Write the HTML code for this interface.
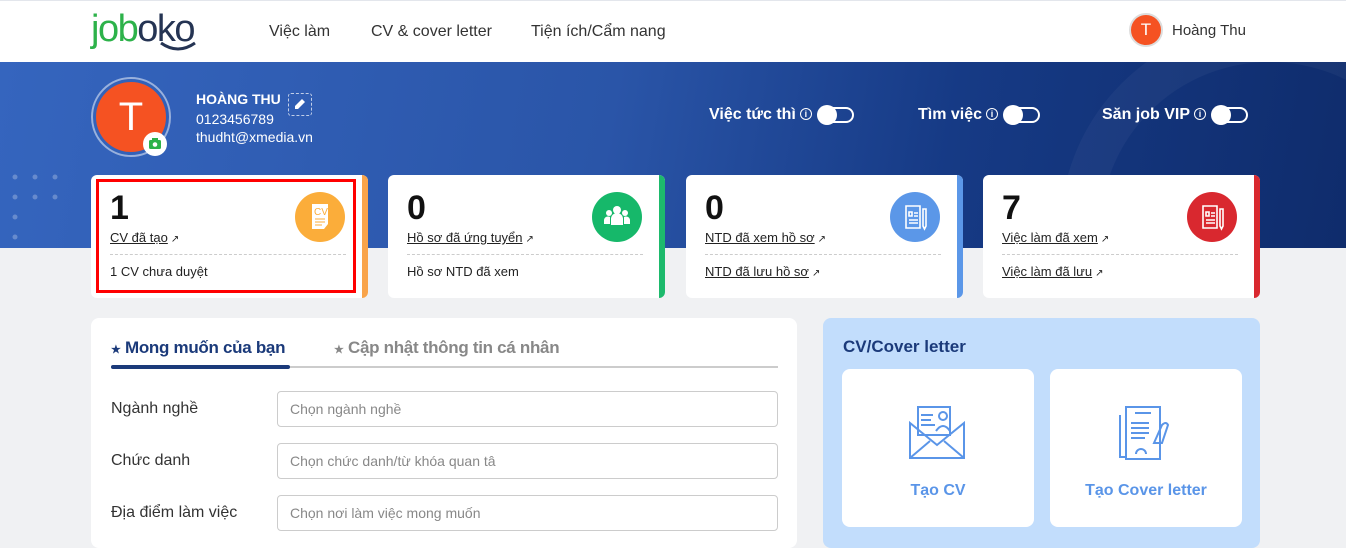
<!DOCTYPE html>
<html><head><meta charset="utf-8"><style>
*{margin:0;padding:0;box-sizing:border-box}
body{width:1346px;height:538px;overflow:hidden;background:#f0f1f3;font-family:"Liberation Sans",Arial,sans-serif;position:relative}
.abs{position:absolute}
.hdr{left:0;top:0;width:1346px;height:62px;background:#fff;border-top:1px solid #e3e6ec}
.nav{top:22px;font-size:16px;color:#333}
.ban{left:0;top:62px;width:1346px;height:186px;background:linear-gradient(100deg,#3565be 0%,#2a55a8 45%,#163a85 70%,#0f2c6c 100%);overflow:hidden}
.card{top:175px;width:277px;height:123px;background:#fff;border-radius:6px;overflow:hidden}
.card .bar{position:absolute;right:0;top:0;width:6px;height:100%}
.num{position:absolute;left:19px;top:14px;font-size:34px;font-weight:bold;color:#111}
.l1{position:absolute;left:19px;top:55px;font-size:13px;color:#222;text-decoration:underline}
.dash{position:absolute;left:19px;right:22px;top:79px;border-top:1px dashed #ccc}
.l2{position:absolute;left:19px;top:89px;font-size:13px;color:#222}
.ic{position:absolute;left:204px;top:17px;width:50px;height:50px;border-radius:50%}
.ext{font-size:10px;text-decoration:none;display:inline-block;margin-left:3px}
.tog{display:inline-block;width:36px;height:16px;border:2px solid #fff;border-radius:9px;position:relative;vertical-align:middle;margin-left:6px}
.tog:before{content:"";position:absolute;left:-3px;top:-4px;width:20px;height:20px;border-radius:50%;background:#fff}
.tl{top:106px;color:#fff;font-weight:bold;font-size:16px}
.info{display:inline-block;width:12px;height:12px;border:1px solid #fff;border-radius:50%;font-size:9px;text-align:center;line-height:10px;margin-left:4px;vertical-align:2px}
.lbl{left:111px;font-size:16px;color:#333}
.inp{left:277px;width:501px;height:36px;border:1px solid #ccc;border-radius:4px;font-size:14px;color:#888;padding:9px 12px}
.sub{top:369px;width:192px;height:158px;background:#fff;border-radius:8px}
.sub .t{position:absolute;left:0;right:0;top:113px;text-align:center;color:#5a95e8;font-weight:bold;font-size:16px}
</style></head><body>
<div class="abs hdr">
 <div class="abs" style="left:91px;top:7px;font-size:38px;letter-spacing:-1.5px;font-weight:normal"><span style="color:#2db24a">job</span><span style="color:#253453">oko</span></div>
 <svg class="abs" style="left:158px;top:40px" width="40" height="12"><path d="M3 2 Q20 14 37 2" stroke="#253453" stroke-width="3" fill="none"/></svg>
 <div class="abs nav" style="left:269px">Việc làm</div>
 <div class="abs nav" style="left:371px">CV &amp; cover letter</div>
 <div class="abs nav" style="left:531px">Tiện ích/Cẩm nang</div>
 <div class="abs" style="left:1129px;top:12px;width:34px;height:34px;border-radius:50%;background:#f55222;border:2px solid #ddd;color:#fff;font-size:17px;text-align:center;line-height:30px">T</div>
 <div class="abs" style="left:1172px;top:21px;font-size:15px;color:#333">Hoàng Thu</div>
</div>
<div class="abs ban">
 <div class="abs" style="left:1060px;top:-40px;width:420px;height:420px;border-radius:50%;border:40px solid rgba(255,255,255,0.04)"></div>
 <svg class="abs" style="left:10px;top:110px" width="110" height="70"><g fill="rgba(255,255,255,0.25)"><circle cx="5" cy="5" r="2.5"/><circle cx="25" cy="5" r="2.5"/><circle cx="45" cy="5" r="2.5"/><circle cx="5" cy="25" r="2.5"/><circle cx="25" cy="25" r="2.5"/><circle cx="45" cy="25" r="2.5"/><circle cx="5" cy="45" r="2.5"/><circle cx="5" cy="65" r="2.5"/></g></svg>
 <div class="abs" style="left:91px;top:15px;width:80px;height:80px;border-radius:50%;border:2px solid rgba(255,255,255,0.5);padding:3px"><div style="width:100%;height:100%;border-radius:50%;background:#f55222;color:#fff;font-size:40px;text-align:center;line-height:70px">T</div></div>
 <div class="abs" style="left:143px;top:70px;width:24px;height:24px;border-radius:50%;background:#fff"><svg width="24" height="24"><rect x="6" y="8" width="12" height="9" rx="1.5" fill="#2db24a"/><rect x="9" y="6" width="6" height="3" fill="#2db24a"/><circle cx="12" cy="12.5" r="2.3" fill="#fff"/></svg></div>
 <div class="abs" style="left:196px;top:29px;color:#fff;font-weight:bold;font-size:14px">HOÀNG THU</div>
 <div class="abs" style="left:288px;top:31px;width:24px;height:23px;border:1px dashed rgba(255,255,255,0.7);border-radius:3px"><svg width="22" height="21"><path d="M6 15 L6 12 L13 5 L16 8 L9 15 Z" fill="#fff"/></svg></div>
 <div class="abs" style="left:196px;top:49px;color:#fff;font-size:14px">0123456789</div>
 <div class="abs" style="left:196px;top:67px;color:#fff;font-size:14px">thudht@xmedia.vn</div>
</div>
<div class="abs tl" style="left:709px">Việc tức thì<span class="info">i</span><span class="tog"></span></div>
<div class="abs tl" style="left:918px">Tìm việc<span class="info">i</span><span class="tog"></span></div>
<div class="abs tl" style="left:1102px">Săn job VIP<span class="info">i</span><span class="tog"></span></div>

<div class="abs card" style="left:91px"><div class="bar" style="background:#f9a44a"></div><div class="num">1</div><div class="l1">CV đã tạo<span class="ext">↗</span></div><div class="dash"></div><div class="l2">1 CV chưa duyệt</div>
<div class="ic" style="background:#fbad3a"><svg width="50" height="50"><path d="M17 12h16v20l-4 5H17z" fill="#fff"/><text x="19" y="23" font-size="10" fill="#fbad3a" font-family="Liberation Sans">CV</text><path d="M20 27h10M20 30h10M20 33h7" stroke="#fbad3a"/></svg></div></div>
<div class="abs" style="left:96px;top:179px;width:260px;height:114px;border:3px solid #f00"></div>
<div class="abs card" style="left:388px"><div class="bar" style="background:#1dba6c"></div><div class="num">0</div><div class="l1">Hồ sơ đã ứng tuyển<span class="ext">↗</span></div><div class="dash"></div><div class="l2">Hồ sơ NTD đã xem</div>
<div class="ic" style="background:#16b86a"><svg width="50" height="50" fill="#fff"><circle cx="25" cy="18" r="4"/><circle cx="17" cy="21" r="3"/><circle cx="33" cy="21" r="3"/><path d="M19 33v-6a6 6 0 0 1 12 0v6z"/><path d="M12 32v-4a4 4 0 0 1 6-3v7zM38 32v-4a4 4 0 0 0-6-3v7z"/></svg></div></div>
<div class="abs card" style="left:686px"><div class="bar" style="background:#5b97e8"></div><div class="num">0</div><div class="l1">NTD đã xem hồ sơ<span class="ext">↗</span></div><div class="dash"></div><div class="l1" style="top:89px">NTD đã lưu hồ sơ<span class="ext">↗</span></div>
<div class="ic" style="background:#5b97e8"><svg width="50" height="50" fill="none" stroke="#fff" stroke-width="1.6"><path d="M16 14h14v22H16z"/><path d="M19 20h3v4h-3zM24 21h4M24 24h4M19 28h9M19 31h9M33 17v17l1.5 3 1.5-3V17z"/></svg></div></div>
<div class="abs card" style="left:983px"><div class="bar" style="background:#d9282f"></div><div class="num">7</div><div class="l1">Việc làm đã xem<span class="ext">↗</span></div><div class="dash"></div><div class="l1" style="top:89px">Việc làm đã lưu<span class="ext">↗</span></div>
<div class="ic" style="background:#d9282f"><svg width="50" height="50" fill="none" stroke="#fff" stroke-width="1.6"><path d="M16 14h14v22H16z"/><path d="M19 20h3v4h-3zM24 21h4M24 24h4M19 28h9M19 31h9M33 17v17l1.5 3 1.5-3V17z"/></svg></div></div>

<div class="abs" style="left:91px;top:318px;width:706px;height:230px;background:#fff;border-radius:8px"></div>
<div class="abs" style="left:111px;top:338px;font-size:17px;font-weight:bold;color:#1b3a7a;letter-spacing:-0.3px"><span style="font-size:11px">★</span> Mong muốn của bạn</div>
<div class="abs" style="left:334px;top:338px;font-size:17px;font-weight:bold;color:#888;letter-spacing:-0.3px"><span style="font-size:11px">★</span> Cập nhật thông tin cá nhân</div>
<div class="abs" style="left:111px;top:366px;width:667px;height:2px;background:#ccc"></div>
<div class="abs" style="left:111px;top:365px;width:179px;height:4px;background:#1b3a7a;border-radius:2px"></div>
<div class="abs lbl" style="top:400px">Ngành nghề</div>
<div class="abs inp" style="top:391px">Chọn ngành nghề</div>
<div class="abs lbl" style="top:452px">Chức danh</div>
<div class="abs inp" style="top:443px">Chọn chức danh/từ khóa quan tâ</div>
<div class="abs lbl" style="top:504px">Địa điểm làm việc</div>
<div class="abs inp" style="top:495px">Chọn nơi làm việc mong muốn</div>

<div class="abs" style="left:823px;top:318px;width:437px;height:230px;background:#c2ddfc;border-radius:8px"></div>
<div class="abs" style="left:843px;top:337px;font-size:17px;font-weight:bold;color:#1b3a7a">CV/Cover letter</div>
<div class="abs sub" style="left:842px"><svg class="abs" style="left:66px;top:34px" width="60" height="60" fill="none" stroke="#5a95e8" stroke-width="2"><path d="M10 4h32v28H10z"/><circle cx="35" cy="13" r="4"/><path d="M28 28q7-10 14 0"/><path d="M13 12h12M13 17h10M13 22h14"/><path d="M2 20v35h54V20L29 42z"/><path d="M2 55l20-17M56 55L36 38"/></svg><div class="t">Tạo CV</div></div>
<div class="abs sub" style="left:1050px"><svg class="abs" style="left:66px;top:34px" width="60" height="60" fill="none" stroke="#5a95e8" stroke-width="2"><path d="M10 4h34v52H10z"/><path d="M4 12v42h6M19 10h16M15 20h18M15 25h18M15 30h18M15 35h14"/><path d="M20 51a5 5 0 0 1 10 0"/><path d="M38 40l8-18q4-4 6 0l-6 18z"/></svg><div class="t">Tạo Cover letter</div></div>
</body></html>
